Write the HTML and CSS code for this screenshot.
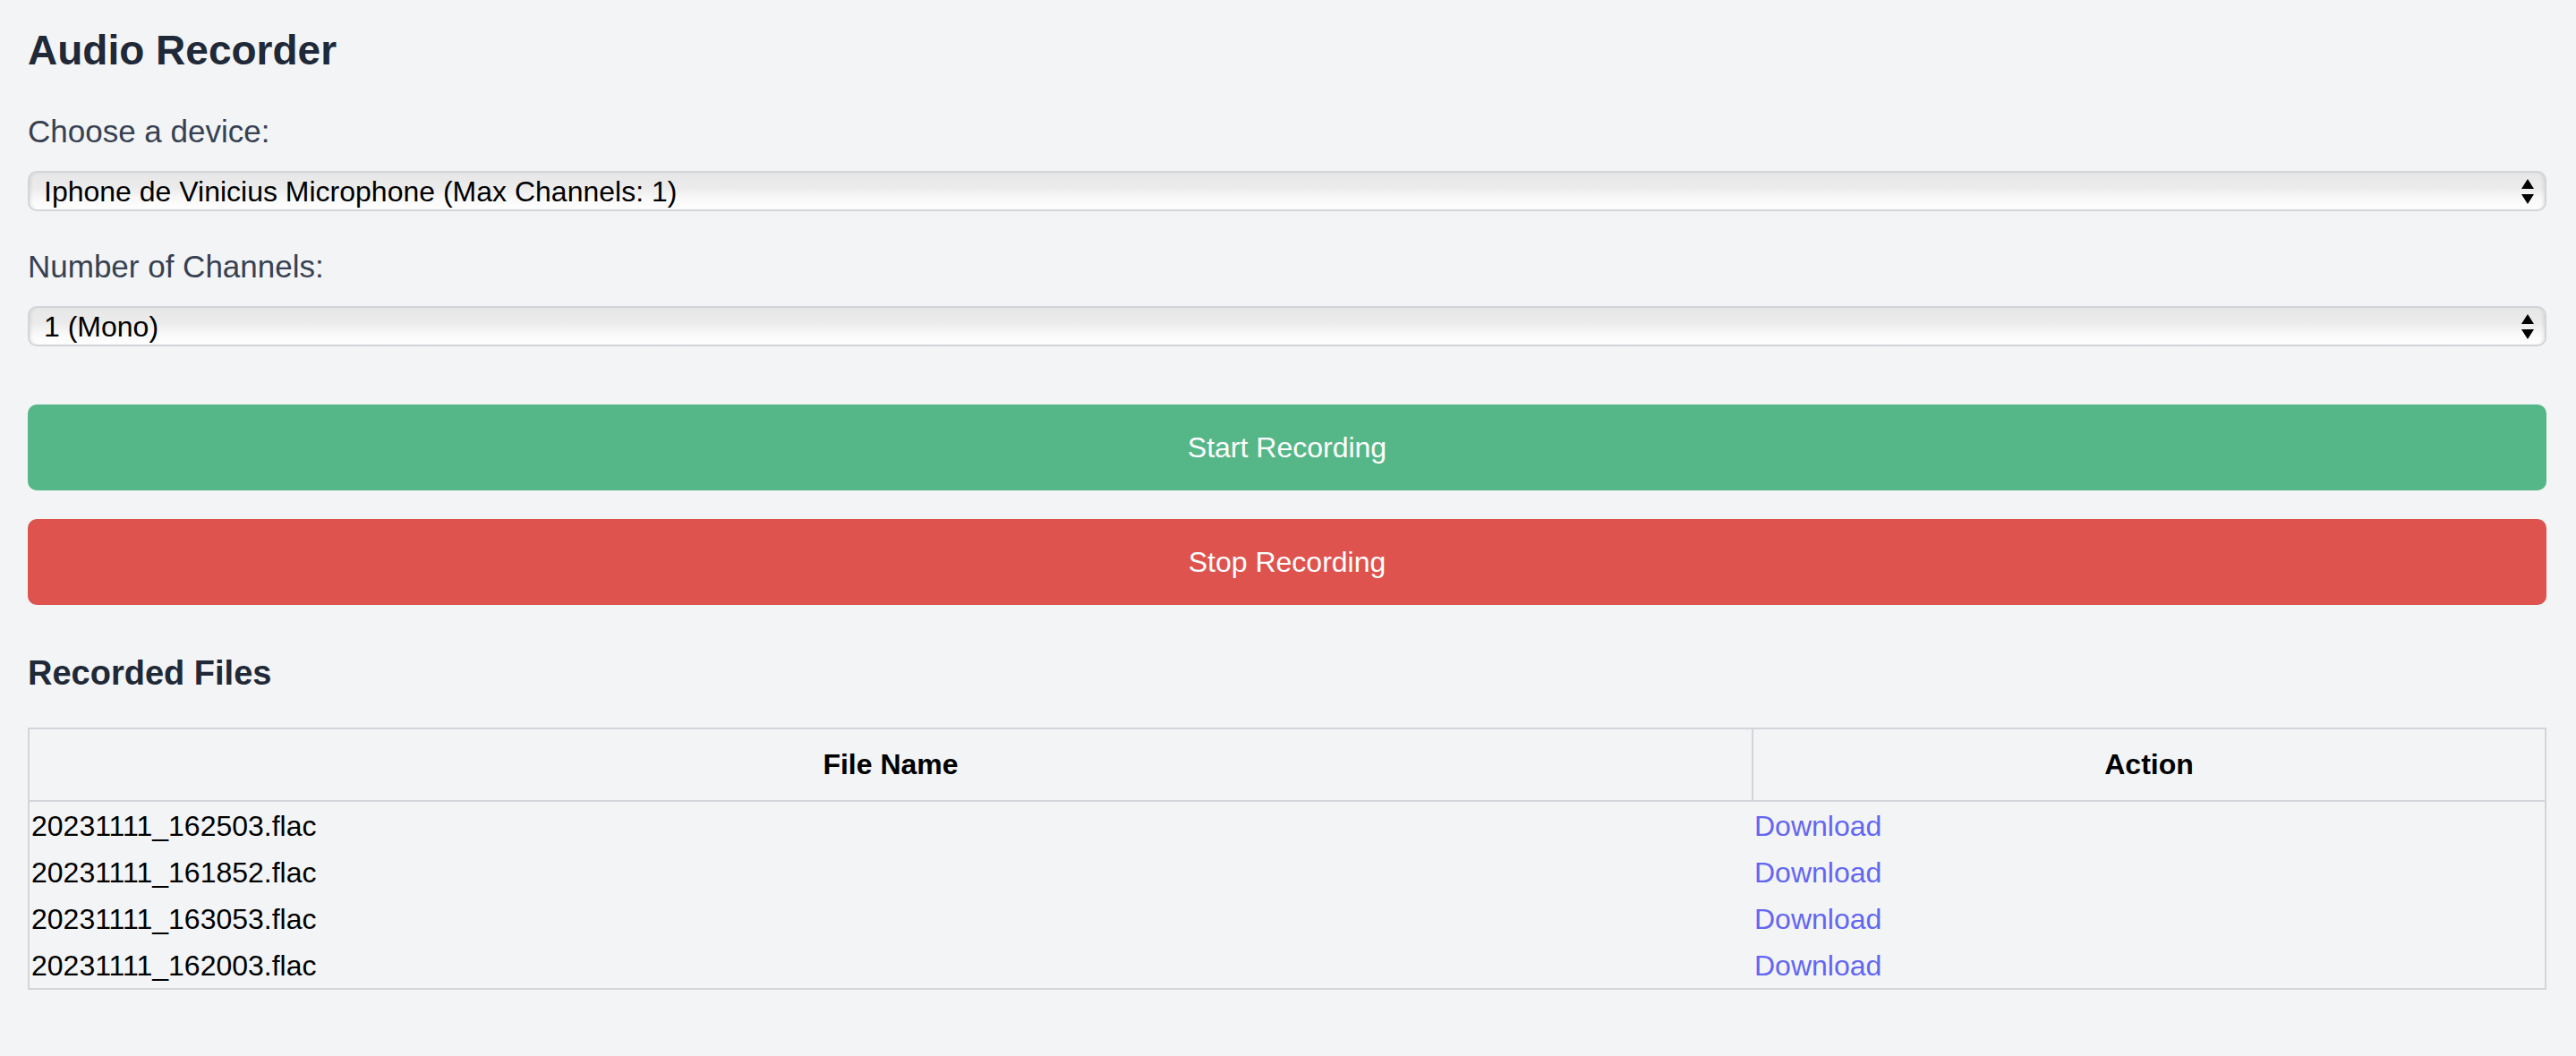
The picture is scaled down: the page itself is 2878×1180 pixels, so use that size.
FILE: index.html
```html
<!DOCTYPE html>
<html lang="en">
<head>
<meta charset="utf-8">
<title>Audio Recorder</title>
<link rel="stylesheet" href="styles.css">
</head>
<body>
<main class="app">
  <h1 class="title">Audio Recorder</h1>

  <label class="field-label" for="device">Choose a device:</label>
  <select class="select" id="device">
    <option>Iphone de Vinicius Microphone (Max Channels: 1)</option>
  </select>

  <label class="field-label" for="channels">Number of Channels:</label>
  <select class="select" id="channels">
    <option>1 (Mono)</option>
  </select>

  <button class="btn btn-start" type="button">Start Recording</button>
  <button class="btn btn-stop" type="button">Stop Recording</button>

  <h2 class="section-title">Recorded Files</h2>

  <table class="files">
    <colgroup>
      <col class="col-name">
      <col class="col-action">
    </colgroup>
    <thead>
      <tr><th>File Name</th><th>Action</th></tr>
    </thead>
    <tbody>
      <tr><td>20231111_162503.flac</td><td><a class="link" href="#">Download</a></td></tr>
      <tr><td>20231111_161852.flac</td><td><a class="link" href="#">Download</a></td></tr>
      <tr><td>20231111_163053.flac</td><td><a class="link" href="#">Download</a></td></tr>
      <tr><td>20231111_162003.flac</td><td><a class="link" href="#">Download</a></td></tr>
    </tbody>
  </table>
</main>
</body>
</html>
```

FILE: styles.css
```css
* { box-sizing: border-box; }

html, body {
  margin: 0;
  padding: 0;
  background: #f3f4f6;
}

body {
  font-family: "Liberation Sans", Arial, sans-serif;
  color: #000;
}

.app {
  display: flex;
  flex-direction: column;
  padding: 28px 33px 0 31px;
}

.title {
  margin: 0;
  font-size: 46px;
  line-height: 56px;
  font-weight: 700;
  color: #1f2937;
}

.field-label {
  display: block;
  margin-top: 43px;
  font-size: 35px;
  line-height: 40px;
  color: #374151;
}

.select + .field-label {
  margin-top: 42px;
}

.select {
  -webkit-appearance: none;
  appearance: none;
  display: block;
  width: 100%;
  height: 45px;
  margin: 24px 0 0;
  padding: 0 50px 0 16px;
  font-family: "Liberation Sans", Arial, sans-serif;
  font-size: 32px;
  color: #000;
  border: 2px solid #d3d5da;
  border-radius: 10px;
  background-color: #f4f4f4;
  background-image:
    url("data:image/svg+xml;utf8,<svg xmlns='http://www.w3.org/2000/svg' width='14' height='28' viewBox='0 0 14 28'><polygon points='7,0 14,11 0,11' fill='black'/><polygon points='0,17 14,17 7,28' fill='black'/></svg>"),
    linear-gradient(to bottom, #e7e7e7 0%, #ebebeb 40%, #f8f8f8 70%, #ffffff 100%);
  background-repeat: no-repeat, no-repeat;
  background-position: right 12px center, 0 0;
  background-size: 14px 28px, 100% 100%;
  box-shadow: inset 3px 0 3px -1px rgba(0, 0, 0, 0.07), inset -3px 0 3px -1px rgba(0, 0, 0, 0.07);
}

.btn {
  display: block;
  width: 100%;
  height: 96px;
  border: none;
  border-radius: 10px;
  font-family: "Liberation Sans", Arial, sans-serif;
  font-size: 32px;
  color: #ffffff;
  cursor: pointer;
}

.btn-start {
  margin-top: 65px;
  background: #55b787;
}

.btn-stop {
  margin-top: 32px;
  background: #de534e;
}

.section-title {
  margin: 52px 0 0;
  font-size: 38px;
  line-height: 48px;
  font-weight: 700;
  color: #1f2937;
}

.files {
  margin-top: 37px;
  width: 100%;
  border-collapse: collapse;
  table-layout: fixed;
  border: 2px solid #d3d5da;
  font-size: 32px;
}

.col-name { width: 1926px; }

.files th {
  padding: 16px 2px;
  line-height: 47px;
  font-weight: 700;
  text-align: center;
  border: 2px solid #d3d5da;
}

.files td {
  padding: 3px 2px 1px;
  line-height: 48px;
  text-align: left;
}

.link {
  color: #6366f1;
  text-decoration: none;
}
```
